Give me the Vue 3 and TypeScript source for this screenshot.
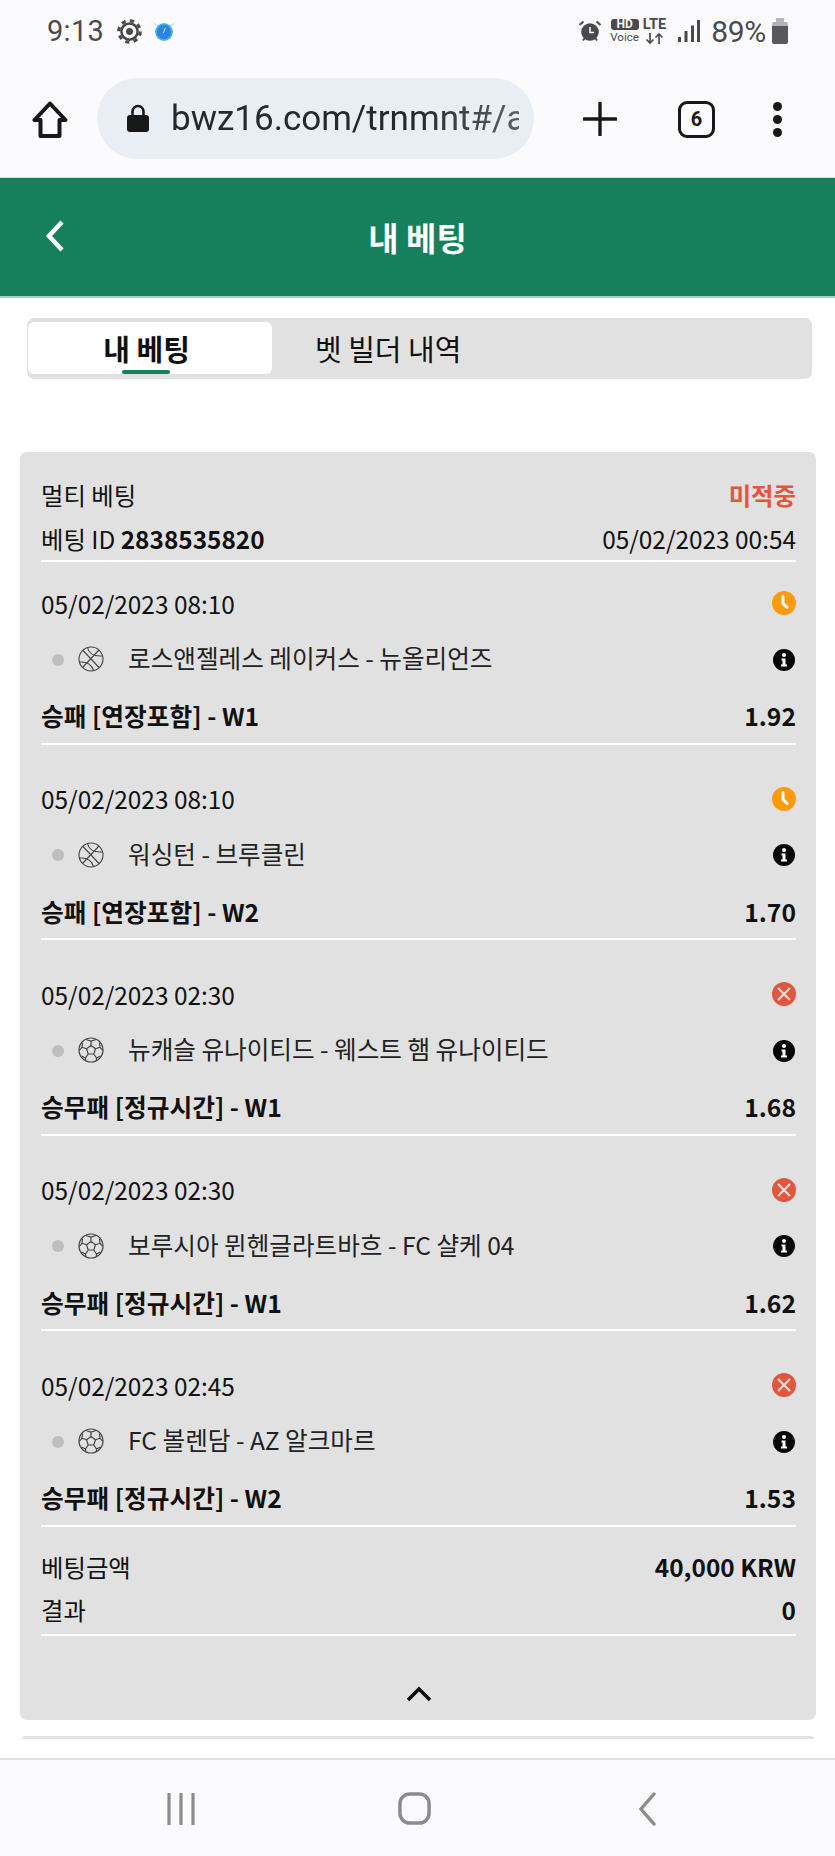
<script setup lang="ts">
// My bets screen: phone status bar, browser toolbar, slip list, nav bar
interface Leg {
  date: string
  state: 'pending' | 'lost'
  sport: 'basket' | 'soccer'
  match: string
  market: string
  odds: string
}

const legs: Leg[] = [
  { date: '05/02/2023 08:10', state: 'pending', sport: 'basket', match: '로스앤젤레스 레이커스 - 뉴올리언즈', market: '승패 [연장포함] - W1', odds: '1.92' },
  { date: '05/02/2023 08:10', state: 'pending', sport: 'basket', match: '워싱턴 - 브루클린', market: '승패 [연장포함] - W2', odds: '1.70' },
  { date: '05/02/2023 02:30', state: 'lost', sport: 'soccer', match: '뉴캐슬 유나이티드 - 웨스트 햄 유나이티드', market: '승무패 [정규시간] - W1', odds: '1.68' },
  { date: '05/02/2023 02:30', state: 'lost', sport: 'soccer', match: '보루시아 뮌헨글라트바흐 - FC 샬케 04', market: '승무패 [정규시간] - W1', odds: '1.62' },
  { date: '05/02/2023 02:45', state: 'lost', sport: 'soccer', match: 'FC 볼렌담 - AZ 알크마르', market: '승무패 [정규시간] - W2', odds: '1.53' },
]
</script>

<template>
  <div class="screen">
    <div class="statusbar">
      <div class="status-left">
        <span class="clock">9:13</span>
        <svg class="gear" viewBox="0 0 24 24" width="25" height="25">
          <g fill="none" stroke="#4a4a4c">
            <circle cx="12" cy="12" r="10.300" stroke-width="3" stroke-dasharray="4 4.090" />
            <circle cx="12" cy="12" r="7.800" stroke-width="2.400" />
          </g>
          <circle cx="12" cy="12" r="3.300" fill="#4a4a4c" />
        </svg>
        <svg class="bird" viewBox="0 0 26 20" width="26" height="20">
          <path d="M0 0l10 6-1 2zM26 0L16 6l1 2z" fill="#bcdcd9" />
          <circle cx="13" cy="11" r="8.500" fill="#2c83e6" />
          <circle cx="13" cy="11" r="8" fill="none" stroke="#4bb4d2" stroke-width="1.600" />
          <path d="M12.500 12l1.800-5" stroke="#d5ecff" stroke-width="1" />
        </svg>
      </div>
      <div class="status-right">
        <svg class="alarm" viewBox="0 0 24 24" width="24" height="24">
          <circle cx="12" cy="13" r="8.800" fill="#4a4a4c" />
          <path d="M12 8v5.400h4" fill="none" stroke="#fff" stroke-width="1.500" />
          <path d="M1.500 6l4-3.500M22.500 6l-4-3.500M5 21.500l2-2.600M19 21.500l-2-2.600" stroke="#4a4a4c" stroke-width="2" />
        </svg>
        <span class="hd-voice"><b class="hd">HD</b><i class="voice">Voice</i></span>
        <span class="lte"><b>LTE</b><svg viewBox="0 0 20 11" width="20" height="11"><path d="M5 0v10M1.500 6.500L5 10l3.500-3.500M14 11V1M10.500 4.500L14 1l3.500 3.500" fill="none" stroke="#4a4a4c" stroke-width="1.700" /></svg></span>
        <svg class="signal" viewBox="0 0 22 24" width="22" height="24">
          <path d="M0 18h3v5H0zM6.500 12h3v11h-3zM13 6.500h3V23h-3zM19 1h3v22h-3z" fill="#4a4a4c" />
        </svg>
        <span class="pct">89%</span>
        <svg class="battery" viewBox="0 0 18 26" width="18" height="26">
          <path d="M5 0h8v5H5z" fill="#b5b5b7" />
          <path d="M1 5.500a2 2 0 0 1 2-1.500h12a2 2 0 0 1 2 1.500V8H1z" fill="#b5b5b7" />
          <path d="M1 8h16v16a2 2 0 0 1-2 2H3a2 2 0 0 1-2-2z" fill="#59595b" />
        </svg>
      </div>
    </div>

    <div class="toolbar">
      <svg class="home" viewBox="0 0 38 38" width="38" height="38">
        <path d="M19 2.500L3.500 19h6v16h19V19h6z" fill="none" stroke="#17181a" stroke-width="4" stroke-linejoin="round" />
      </svg>
      <div class="omnibox">
        <svg class="lock" viewBox="0 0 24 30" width="24" height="30">
          <path d="M6.500 14V8.500a5.500 5.500 0 0 1 11 0V14" fill="none" stroke="#17181a" stroke-width="2.600" />
          <rect x="1" y="12" width="22" height="17" rx="3" fill="#17181a" />
        </svg>
        <span class="url">bwz16.com/trnmnt#/a</span>
      </div>
      <svg class="plus" viewBox="0 0 34 34" width="34" height="34">
        <path d="M17 1v32M1 17h32" stroke="#17181a" stroke-width="3.400" stroke-linecap="round" />
      </svg>
      <span class="tabcount">6</span>
      <span class="dots"><i></i><i></i><i></i></span>
    </div>

    <header class="topbar">
      <svg class="back" viewBox="0 0 22 34" width="22" height="34">
        <path d="M18 3L5 17l13 14" fill="none" stroke="#fff" stroke-width="4.500" />
      </svg>
      <h1>내 베팅</h1>
    </header>

    <main class="content">
      <div class="tabs">
        <div class="tab active">내 베팅<span class="tab-line"></span></div>
        <div class="tab">벳 빌더 내역</div>
      </div>

      <section class="slip">
        <div class="slip-head">
          <div class="row"><span>멀티 베팅</span><b class="lost-label">미적중</b></div>
          <div class="row"><span>베팅 ID <b>2838535820</b></span><span>05/02/2023 00:54</span></div>
        </div>

        <div v-for="(leg, i) in legs" :key="i" class="leg">
          <div class="row">
            <span>{{ leg.date }}</span>
            <svg v-if="leg.state === 'pending'" class="state" viewBox="0 0 24 24" width="24" height="24">
              <circle cx="12" cy="12" r="12" fill="#ff9a0d" />
              <path d="M11 5.500v7l4.200 4" fill="none" stroke="#fff" stroke-width="3" stroke-linecap="round" />
            </svg>
            <svg v-else class="state" viewBox="0 0 24 24" width="24" height="24">
              <circle cx="12" cy="12" r="12" fill="#e2563f" />
              <path d="M6 6l12 12M18 6L6 18" stroke="#f6dcd6" stroke-width="2.200" />
            </svg>
          </div>
          <div class="row match-row">
            <span class="match-left">
              <i class="dot"></i>
              <svg v-if="leg.sport === 'basket'" viewBox="0 0 26 26" width="26" height="26" class="sport">
                <g fill="none" stroke="#444" stroke-width="1.100">
                  <circle cx="13" cy="13" r="12" />
                  <path d="M5 4.500L21.500 22M21 4L4.500 21.500M9.500 1.500c1 5 5.500 9 14.500 8.500M1.500 16c8-.5 12.500 3.500 14 8.500" />
                </g>
              </svg>
              <svg v-else viewBox="0 0 26 26" width="26" height="26" class="sport">
                <g fill="none" stroke="#444" stroke-width="1.200">
                  <circle cx="13" cy="13" r="12" />
                  <path d="M13 8.500l4.500 3.300-1.700 5.200h-5.600l-1.700-5.200zM13 8.500V4M17.500 11.800l4.500-1.500M15.800 17l2.700 4M10.200 17l-2.700 4M8.500 11.800L4 10.300M8 2.500L13 4l5-1.500M22 10.300l2.800 3M22 10.300l-.5-4.500M18.500 21l-.2 2.800M18.500 21l4-2M7.500 21l.2 2.800M7.500 21l-4-2M4 10.300l-2.800 3M4 10.300l.5-4.500" />
                </g>
              </svg>
              <span class="match">{{ leg.match }}</span>
            </span>
            <svg class="info" viewBox="0 0 22 22" width="22" height="22">
              <circle cx="11" cy="11" r="11" fill="#050505" />
              <circle cx="11" cy="6" r="2" fill="#fff" />
              <path d="M8.500 9.500h4v6h1.500V17.500H8V15.500h1.500v-4h-1z" fill="#fff" />
            </svg>
          </div>
          <div class="row market-row">
            <b>{{ leg.market }}</b>
            <b>{{ leg.odds }}</b>
          </div>
        </div>

        <div class="summary">
          <div class="row"><span>베팅금액</span><b>40,000 KRW</b></div>
          <div class="row"><span>결과</span><b>0</b></div>
        </div>

        <div class="collapse">
          <svg viewBox="0 0 26 16" width="26" height="16">
            <path d="M2 14L13 3l11 11" fill="none" stroke="#0a0a0a" stroke-width="3.400" />
          </svg>
        </div>
      </section>

      <div class="next-slip"></div>
    </main>

    <nav class="navbar">
      <svg viewBox="0 0 32 32" width="32" height="32">
        <path d="M4 1v30M16 1v30M28 1v30" stroke="#8b8b8d" stroke-width="3.200" stroke-linecap="round" />
      </svg>
      <svg class="nav-home" viewBox="0 0 34 34" width="33" height="33">
        <rect x="2" y="2" width="30" height="30" rx="10" fill="none" stroke="#8b8b8d" stroke-width="3.600" />
      </svg>
      <svg viewBox="0 0 20 34" width="20" height="34">
        <path d="M17 2L4 17l13 15" fill="none" stroke="#8b8b8d" stroke-width="3.400" stroke-linecap="round" />
      </svg>
    </nav>
  </div>
</template>

<style scoped>
.screen {
  width: 835px;
  height: 1856px;
  display: flex;
  flex-direction: column;
  overflow: hidden;
  background: #fff;
  color: #111;
  font-family: "Noto Sans CJK KR", "Noto Sans", sans-serif;
}

.statusbar {
  height: 59px;
  flex: none;
  box-sizing: border-box;
  padding: 3px 46px 0 47px;
  display: flex;
  align-items: center;
  justify-content: space-between;
  background: #fbfbfd;
  color: #4a4a4c;
  font-family: Roboto, sans-serif;
}
.status-left,
.status-right {
  display: flex;
  align-items: center;
}
.clock { font-size: 29px; letter-spacing: .3px; }
.gear { margin-left: 13px; }
.bird { margin-left: 9px; margin-top: -1px; }
.pct { font-size: 30px; margin-left: 11px; letter-spacing: -.3px; }
.hd-voice,
.lte {
  display: flex;
  flex-direction: column;
  align-items: center;
  line-height: 1;
}
.hd-voice { margin-left: 8px; }
.lte { margin-left: 4px; }
.hd {
  width: 28px;
  height: 11px;
  background: #4a4a4c;
  color: #fbfbfd;
  border-radius: 3px;
  font-size: 12px;
  line-height: 11px;
  text-align: center;
}
.voice { font-size: 11.500px; font-style: normal; margin-top: 2px; }
.lte b { font-size: 14.500px; font-weight: 700; }
.signal { margin-left: 12px; }
.battery { margin-left: 5px; }

.toolbar {
  height: 118px;
  flex: none;
  padding: 0 0 0 31px;
  display: flex;
  align-items: center;
  background: #fbfbfd;
  border-bottom: 1px solid #d9dcdf;
}
.home { flex: none; margin-top: 3px; }
.omnibox {
  margin-left: 28px;
  width: 437px;
  height: 81px;
  flex: none;
  box-sizing: border-box;
  border-radius: 41px;
  background: #e8eef4;
  padding: 0 15px 0 29px;
  display: flex;
  align-items: center;
  overflow: hidden;
}
.lock { flex: none; }
.url {
  margin-left: 21px;
  font-family: Roboto, sans-serif;
  font-size: 35px;
  color: #24292e;
  white-space: nowrap;
  overflow: hidden;
  -webkit-mask-image: linear-gradient(to right, #000 70%, rgba(0, 0, 0, .72));
  mask-image: linear-gradient(to right, #000 70%, rgba(0, 0, 0, .72));
}
.plus { margin-left: 49px; flex: none; margin-top: 2px; }
.tabcount {
  margin-left: 61px;
  margin-top: 2px;
  width: 37px;
  height: 37px;
  box-sizing: border-box;
  flex: none;
  border: 3.500px solid #17181a;
  border-radius: 9px;
  display: flex;
  align-items: center;
  justify-content: center;
  font: 700 20px Roboto, sans-serif;
  color: #17181a;
}
.dots {
  margin-left: 58px;
  margin-top: 3px;
  display: flex;
  flex-direction: column;
  gap: 4px;
}
.dots i {
  width: 9px;
  height: 9px;
  border-radius: 50%;
  background: #17181a;
}

.topbar {
  height: 118px;
  flex: none;
  position: relative;
  display: flex;
  align-items: center;
  justify-content: center;
  background: #16805c;
  border-bottom: 2px solid #a9cfc2;
}
.topbar h1 {
  margin: 0;
  color: #fff;
  font-size: 33px;
  font-weight: 700;
  line-height: 1;
}
.back {
  position: absolute;
  left: 44px;
  top: 41px;
}

.content {
  flex: 1;
  min-height: 0;
  overflow: hidden;
  padding: 20px 19px 0 20px;
}

.tabs {
  margin: 0 4px 0 7px;
  height: 61px;
  padding: 4px 2px 5px 1px;
  box-sizing: border-box;
  display: flex;
  background: #e1e1e1;
  border-radius: 7px;
}
.tab {
  font-size: 29px;
  line-height: 52px;
  padding-left: 43px;
}
.tab.active {
  position: relative;
  width: 244px;
  box-sizing: border-box;
  padding: 0 7px 0 0;
  text-align: center;
  font-weight: 700;
  background: #fff;
  border-radius: 6px;
}
.tab-line {
  position: absolute;
  left: 94px;
  bottom: 0;
  width: 48px;
  height: 4px;
  border-radius: 2px;
  background: #16805c;
}

.slip {
  margin-top: 73px;
  padding: 0 20px 0 21px;
  height: 1268px;
  box-sizing: border-box;
  background: #e1e1e1;
  border-radius: 7px;
  font-size: 24.400px;
}
.row {
  display: flex;
  align-items: center;
  justify-content: space-between;
  height: 28px;
  white-space: nowrap;
}
.slip-head {
  padding-top: 28px;
  padding-bottom: 8px;
  border-bottom: 2px solid #fff;
}
.slip-head .row + .row { margin-top: 16px; }
.lost-label { color: #e0563f; }

.leg {
  padding: 40px 0 13.600px;
  border-bottom: 2px solid #fff;
}
.slip-head + .leg { padding-top: 27px; }
.match-row { margin-top: 27px; }
.market-row { margin-top: 29px; font-size: 24.700px; }
.match-left {
  display: flex;
  align-items: center;
  padding-left: 11px;
}
.dot {
  width: 12px;
  height: 12px;
  margin-top: 3px;
  border-radius: 50%;
  background: #bebebe;
}
.sport { margin-left: 14px; margin-top: 2px; }
.match { margin-left: 24px; margin-top: -2px; color: #222; font-size: 24.600px; }
.state { flex: none; }
.info { flex: none; margin-right: 1px; margin-top: 3px; }

.summary {
  padding-top: 26px;
  padding-bottom: 10px;
  border-bottom: 2px solid #fff;
}
.summary .row + .row { margin-top: 15px; }
.collapse {
  display: flex;
  justify-content: center;
  padding-top: 50px;
}

.next-slip {
  margin: 16px 2px 0;
  height: 3px;
  background: #e1e1e1;
  border-radius: 7px 7px 0 0;
}

.navbar {
  height: 95px;
  flex: none;
  padding: 1px 178px 0 165px;
  display: flex;
  align-items: center;
  justify-content: space-between;
  background: #fbfbfd;
  border-top: 2px solid #dfe3e8;
}
.nav-home { margin-right: 5px; }
</style>

<style>
body { background: #fff; }
</style>
